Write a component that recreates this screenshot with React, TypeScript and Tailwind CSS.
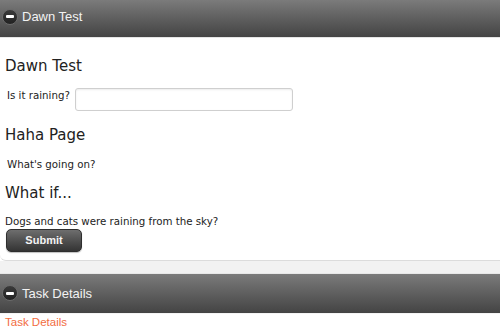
function CollapseIcon() {
  return (
    <span className="flex h-[16px] w-[16px] shrink-0 items-center justify-center rounded-full border border-[#6a6a6a] bg-gradient-to-b from-[#3a3a3a] to-[#222]">
      <span className="block h-[3px] w-[8px] rounded-[1px] bg-white" />
    </span>
  );
}

function PanelHeader({ title, height }: { title: string; height: string }) {
  return (
    <div
      className={`flex items-center gap-[4px] bg-gradient-to-b from-[#7b7b7b] to-[#444] pl-[2px] ${height}`}
    >
      <CollapseIcon />
      <span className="text-[13px] leading-[15px] text-[#f2f2f2] [font-family:'Liberation_Sans',Arial,sans-serif]">
        {title}
      </span>
    </div>
  );
}

export default function App() {
  const body = "[font-family:'DejaVu_Sans',Verdana,sans-serif] text-[#222]";
  return (
    <div className="h-[334px] w-[500px] overflow-hidden bg-white">
      <PanelHeader title="Dawn Test" height="h-[37px] pb-[4px]" />
      <div className="h-px bg-[#e4e4e4]" />

      <div className={`rounded-bl-[6px] border-b border-[#dcdcdc] bg-white px-[5px] pt-[18px] pb-[8px] ${body}`}>
        <h2 className="text-[15px] leading-[20px] font-normal">Dawn Test</h2>

        <div className="mt-[12px] flex items-start">
          <label className="w-[70px] pl-[2px] text-[10.25px] leading-[14px]">Is it raining?</label>
          <input
            type="text"
            className="h-[23px] w-[218px] rounded-[3px] border border-[#cfcfcf] bg-white shadow-[inset_0_1px_2px_rgba(0,0,0,0.08)] outline-none"
          />
        </div>

        <h2 className="mt-[14px] text-[15px] leading-[20px] font-normal">Haha Page</h2>
        <p className="mt-[12px] pl-[2px] text-[10.25px] leading-[14px]">What's going on?</p>

        <h2 className="mt-[12px] text-[15px] leading-[20px] font-normal">What if...</h2>
        <p className="mt-[11px] text-[10.25px] leading-[14px]">Dogs and cats were raining from the sky?</p>

        <button className="mt-[1px] ml-[1px] flex h-[23px] w-[76px] items-center justify-center rounded-[5px] border border-[#2e2e2e] bg-gradient-to-b from-[#6e6e6e] to-[#343434] text-[11px] font-bold text-[#f4f4f4] shadow-[0_1px_1px_rgba(0,0,0,0.25)] [font-family:'Liberation_Sans',Arial,sans-serif]">
          Submit
        </button>
      </div>

      <div className="h-[13px] border-b border-[#e8e8e8] bg-[#f2f2f2]" />

      <PanelHeader title="Task Details" height="h-[39px] pb-[1px]" />
      <div className="border-t border-[#f4f4f4] pl-[5px]">
        <a className="block text-[11.5px] leading-[16px] text-[#f26d3f] [font-family:'Liberation_Sans',Arial,sans-serif]">
          Task Details
        </a>
      </div>
    </div>
  );
}
